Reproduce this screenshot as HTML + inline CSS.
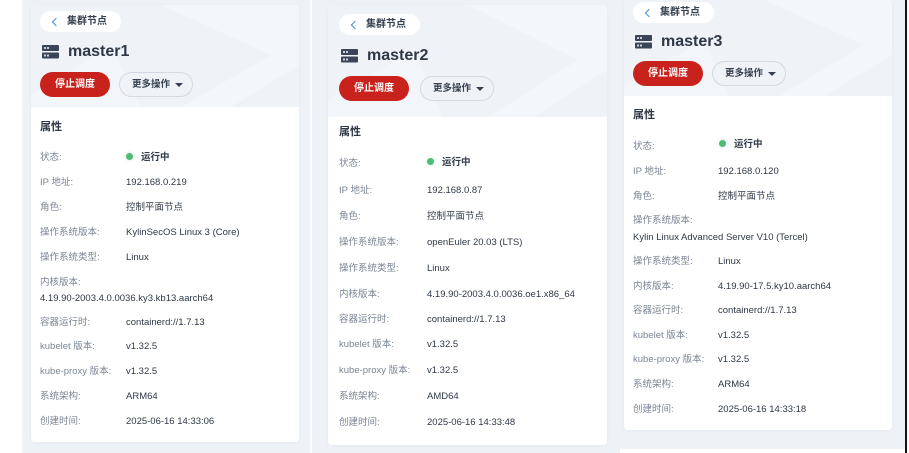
<!DOCTYPE html>
<html><head><meta charset="utf-8">
<style>
*{margin:0;padding:0;box-sizing:border-box}
body{width:909px;height:453px;background:#fff;position:relative;overflow:hidden;font-family:"Liberation Sans","Noto Sans CJK SC",sans-serif;}
.bg{position:absolute;background:#eef2f7}
.card{position:absolute;background:#fff;border-radius:4px;overflow:hidden;box-shadow:0 1px 3px rgba(0,0,0,0.04)}
.hdr{position:absolute;left:0;top:0;right:0;background:#eff3f8;overflow:hidden}
.hdr svg.deco{position:absolute;left:0;top:0}
.pill{position:absolute;height:21px;background:#fff;border-radius:11px;font-size:10px;font-weight:bold;color:#36404f;line-height:21px;padding:0 14px 0 27px;white-space:nowrap}
.pill:before{content:"";position:absolute;left:13px;top:8px;width:5px;height:5px;border-left:1.6px solid #3d8ee6;border-bottom:1.6px solid #3d8ee6;transform:rotate(45deg)}
.title{position:absolute;font-size:16px;font-weight:bold;color:#2e3846;line-height:20px}
.title svg{position:absolute;left:-26px;top:3px}
.red{position:absolute;width:70px;height:25px;border-radius:13px;background:#c9221c;color:#fff;font-size:10px;font-weight:bold;text-align:center;line-height:25px}
.more{position:absolute;width:74px;height:25px;border-radius:13px;border:1px solid #d3d9e2;background:#eff3f8;color:#36404f;font-size:9.5px;font-weight:bold;line-height:23px;padding-left:12px;white-space:nowrap}
.more:after{content:"";position:absolute;right:9px;top:10px;border-left:4px solid transparent;border-right:4px solid transparent;border-top:4px solid #36404f}
.sec{position:absolute;font-size:11px;font-weight:bold;color:#2e3846;line-height:14px}
.l{position:absolute;font-size:9.5px;color:#7b8594;white-space:nowrap;line-height:12px;margin-top:1px}
.v{position:absolute;font-size:9.5px;color:#2e3846;white-space:nowrap;line-height:12px;margin-top:1px}
.dot{display:inline-block;width:7px;height:7px;border-radius:50%;background:#4dbd74;margin-right:8px;vertical-align:0;box-shadow:0 0 4px #cde9d6}
.vb{font-weight:bold}
</style></head><body>

<div class="bg" style="left:22px;top:0;width:288px;height:453px"></div>
<div class="bg" style="left:312px;top:0;width:308px;height:453px"></div>
<div class="bg" style="left:620px;top:0;width:285px;height:449px"></div>
<div style="position:absolute;left:905px;top:0;width:2px;height:453px;background:#111"></div>

<!-- PANEL 1 -->
<div class="card" style="left:31px;top:5px;width:268px;height:437px">
  <div class="hdr" style="height:102px">
    <svg class="deco" width="268" height="102"><polygon points="130,0 268,0 268,60 200,102 150,102 240,50" fill="#f3f6fa"/><polygon points="0,90 80,40 110,102 0,102" fill="#f2f5f9"/></svg>
  </div>
</div>
<div class="pill" style="left:40px;top:11px">集群节点</div>
<div class="title" style="left:68px;top:42px"><svg width="17" height="14" viewBox="0 0 17 14"><rect x="0" y="0" width="17" height="6" rx="1" fill="#3a4556"/><rect x="0" y="7.5" width="17" height="6" rx="1" fill="#3a4556"/><rect x="2" y="2" width="2" height="2" fill="#c8d0dc"/><rect x="5" y="2" width="2" height="2" fill="#c8d0dc"/><rect x="2" y="9.5" width="2" height="2" fill="#c8d0dc"/><rect x="5" y="9.5" width="2" height="2" fill="#c8d0dc"/></svg>master1</div>
<div class="red" style="left:40px;top:72px">停止调度</div>
<div class="more" style="left:119px;top:72px">更多操作</div>
<div class="sec" style="left:40px;top:120px">属性</div>
<div class="l" style="left:40px;top:151px">状态:</div><div class="v vb" style="left:126px;top:151px"><span class="dot"></span>运行中</div>
<div class="l" style="left:40px;top:176px">IP 地址:</div><div class="v" style="left:126px;top:176px">192.168.0.219</div>
<div class="l" style="left:40px;top:201px">角色:</div><div class="v" style="left:126px;top:201px">控制平面节点</div>
<div class="l" style="left:40px;top:226px">操作系统版本:</div><div class="v" style="left:126px;top:226px">KylinSecOS Linux 3 (Core)</div>
<div class="l" style="left:40px;top:251px">操作系统类型:</div><div class="v" style="left:126px;top:251px">Linux</div>
<div class="l" style="left:40px;top:276px">内核版本:</div><div class="v" style="left:40px;top:292px">4.19.90-2003.4.0.0036.ky3.kb13.aarch64</div>
<div class="l" style="left:40px;top:316px">容器运行时:</div><div class="v" style="left:126px;top:316px">containerd://1.7.13</div>
<div class="l" style="left:40px;top:340px">kubelet 版本:</div><div class="v" style="left:126px;top:340px">v1.32.5</div>
<div class="l" style="left:40px;top:365px">kube-proxy 版本:</div><div class="v" style="left:126px;top:365px">v1.32.5</div>
<div class="l" style="left:40px;top:390px">系统架构:</div><div class="v" style="left:126px;top:390px">ARM64</div>
<div class="l" style="left:40px;top:415px">创建时间:</div><div class="v" style="left:126px;top:415px">2025-06-16 14:33:06</div>

<!-- PANEL 2 -->
<div class="card" style="left:328px;top:5px;width:279px;height:440px">
  <div class="hdr" style="height:112px">
    <svg class="deco" width="279" height="112"><polygon points="140,0 279,0 279,65 205,112 160,112 250,55" fill="#f3f6fa"/><polygon points="0,95 85,45 115,112 0,112" fill="#f2f5f9"/></svg>
  </div>
</div>
<div class="pill" style="left:339px;top:14px">集群节点</div>
<div class="title" style="left:367px;top:46px"><svg width="17" height="14" viewBox="0 0 17 14"><rect x="0" y="0" width="17" height="6" rx="1" fill="#3a4556"/><rect x="0" y="7.5" width="17" height="6" rx="1" fill="#3a4556"/><rect x="2" y="2" width="2" height="2" fill="#c8d0dc"/><rect x="5" y="2" width="2" height="2" fill="#c8d0dc"/><rect x="2" y="9.5" width="2" height="2" fill="#c8d0dc"/><rect x="5" y="9.5" width="2" height="2" fill="#c8d0dc"/></svg>master2</div>
<div class="red" style="left:339px;top:76px">停止调度</div>
<div class="more" style="left:420px;top:76px">更多操作</div>
<div class="sec" style="left:339px;top:125px">属性</div>
<div class="l" style="left:339px;top:157px">状态:</div><div class="v vb" style="left:427px;top:156px"><span class="dot"></span>运行中</div>
<div class="l" style="left:339px;top:184px">IP 地址:</div><div class="v" style="left:427px;top:184px">192.168.0.87</div>
<div class="l" style="left:339px;top:210px">角色:</div><div class="v" style="left:427px;top:210px">控制平面节点</div>
<div class="l" style="left:339px;top:236px">操作系统版本:</div><div class="v" style="left:427px;top:236px">openEuler 20.03 (LTS)</div>
<div class="l" style="left:339px;top:262px">操作系统类型:</div><div class="v" style="left:427px;top:262px">Linux</div>
<div class="l" style="left:339px;top:288px">内核版本:</div><div class="v" style="left:427px;top:288px">4.19.90-2003.4.0.0036.oe1.x86_64</div>
<div class="l" style="left:339px;top:313px">容器运行时:</div><div class="v" style="left:427px;top:313px">containerd://1.7.13</div>
<div class="l" style="left:339px;top:338px">kubelet 版本:</div><div class="v" style="left:427px;top:338px">v1.32.5</div>
<div class="l" style="left:339px;top:364px">kube-proxy 版本:</div><div class="v" style="left:427px;top:364px">v1.32.5</div>
<div class="l" style="left:339px;top:390px">系统架构:</div><div class="v" style="left:427px;top:390px">AMD64</div>
<div class="l" style="left:339px;top:416px">创建时间:</div><div class="v" style="left:427px;top:416px">2025-06-16 14:33:48</div>

<!-- PANEL 3 -->
<div class="card" style="left:624px;top:0;width:268px;height:430px">
  <div class="hdr" style="height:96px">
    <svg class="deco" width="268" height="96"><polygon points="140,0 268,0 268,55 200,96 155,96 240,45" fill="#f3f6fa"/><polygon points="0,85 80,40 105,96 0,96" fill="#f2f5f9"/></svg>
  </div>
</div>
<div class="pill" style="left:633px;top:2px">集群节点</div>
<div class="title" style="left:661px;top:32px"><svg width="17" height="14" viewBox="0 0 17 14"><rect x="0" y="0" width="17" height="6" rx="1" fill="#3a4556"/><rect x="0" y="7.5" width="17" height="6" rx="1" fill="#3a4556"/><rect x="2" y="2" width="2" height="2" fill="#c8d0dc"/><rect x="5" y="2" width="2" height="2" fill="#c8d0dc"/><rect x="2" y="9.5" width="2" height="2" fill="#c8d0dc"/><rect x="5" y="9.5" width="2" height="2" fill="#c8d0dc"/></svg>master3</div>
<div class="red" style="left:633px;top:61px">停止调度</div>
<div class="more" style="left:712px;top:61px">更多操作</div>
<div class="sec" style="left:633px;top:108px">属性</div>
<div class="l" style="left:633px;top:140px">状态:</div><div class="v vb" style="left:719px;top:138px"><span class="dot"></span>运行中</div>
<div class="l" style="left:633px;top:165px">IP 地址:</div><div class="v" style="left:718px;top:165px">192.168.0.120</div>
<div class="l" style="left:633px;top:190px">角色:</div><div class="v" style="left:718px;top:190px">控制平面节点</div>
<div class="l" style="left:633px;top:214px">操作系统版本:</div><div class="v" style="left:633px;top:231px">Kylin Linux Advanced Server V10 (Tercel)</div>
<div class="l" style="left:633px;top:255px">操作系统类型:</div><div class="v" style="left:718px;top:255px">Linux</div>
<div class="l" style="left:633px;top:280px">内核版本:</div><div class="v" style="left:718px;top:280px">4.19.90-17.5.ky10.aarch64</div>
<div class="l" style="left:633px;top:304px">容器运行时:</div><div class="v" style="left:718px;top:304px">containerd://1.7.13</div>
<div class="l" style="left:633px;top:329px">kubelet 版本:</div><div class="v" style="left:718px;top:329px">v1.32.5</div>
<div class="l" style="left:633px;top:353px">kube-proxy 版本:</div><div class="v" style="left:718px;top:353px">v1.32.5</div>
<div class="l" style="left:633px;top:378px">系统架构:</div><div class="v" style="left:718px;top:378px">ARM64</div>
<div class="l" style="left:633px;top:403px">创建时间:</div><div class="v" style="left:718px;top:403px">2025-06-16 14:33:18</div>

</body></html>
